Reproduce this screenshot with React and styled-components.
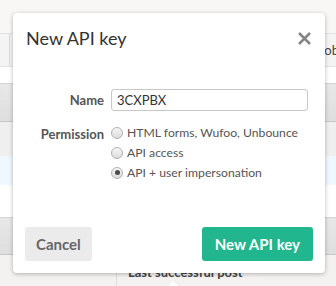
import styled, { createGlobalStyle } from "styled-components"

const GlobalStyle = createGlobalStyle`
    html, body {
        margin: 0;
        padding: 0;
        background: #ffffff;
    }
    body {
        font-family: Lato, "Open Sans", "Liberation Sans", sans-serif;
    }
`

const options = [
    { id: "forms", label: "HTML forms, Wufoo, Unbounce", checked: false },
    { id: "api", label: "API access", checked: false },
    { id: "impersonation", label: "API + user impersonation", checked: true },
]

export default function App() {
    return (
        <>
            <GlobalStyle />
            <Page>
                <TopStrip />
                <HeaderRow>
                    <EdgeCell />
                    <HeaderText>ob</HeaderText>
                </HeaderRow>
                <Band $height={16} $bg="#ffffff" />
                <GradientBar $height={39} />
                <Band $height={34} $bg="#efefef" />
                <Band $height={29} $bg="#eff8fe" />
                <Band $height={32} $bg="#ffffff" />
                <GradientBar $height={38} />
                <FooterRow>
                    <FooterCell />
                    <FooterText>Last successful post</FooterText>
                </FooterRow>

                <Dialog>
                    <DialogHeader>
                        <Title>New API key</Title>
                        <Close aria-label="Close">
                            <svg width="15" height="15" viewBox="0 0 15 15">
                                <path d="M2 2 L13 13 M13 2 L2 13" stroke="#858585" strokeWidth="2.5" />
                            </svg>
                        </Close>
                    </DialogHeader>
                    <Form>
                        <Label>Name</Label>
                        <TextInput defaultValue="3CXPBX" />
                        <Label $top>Permission</Label>
                        <Options>
                            {options.map((o) => (
                                <Option key={o.id}>
                                    <Radio $checked={o.checked} />
                                    <OptionText>{o.label}</OptionText>
                                </Option>
                            ))}
                        </Options>
                    </Form>
                    <DialogFooter>
                        <Button>Cancel</Button>
                        <Button $primary>New API key</Button>
                    </DialogFooter>
                </Dialog>
                <Pointer />
            </Page>
        </>
    )
}

const Page = styled.div`
    position: relative;
    width: 336px;
    height: 286px;
    overflow: hidden;
    display: flex;
    flex-direction: column;
`
const TopStrip = styled.div`
    height: 33px;
    flex: none;
    background: #f8f7f5;
`
const HeaderRow = styled.div`
    height: 34px;
    flex: none;
    display: flex;
    align-items: center;
    background: #f4f4f4;
    border-top: 1px solid #e2e2e2;
    border-bottom: 1px solid #e2e2e2;
    box-sizing: border-box;
`
const EdgeCell = styled.div`
    width: 9px;
    align-self: stretch;
    border-right: 1px solid #dcdcdc;
`
const HeaderText = styled.div`
    margin-left: auto;
    margin-right: -3px;
    font-size: 13px;
    color: #444;
`
const Band = styled.div`
    height: ${(p) => p.$height}px;
    flex: none;
    background: ${(p) => p.$bg};
`
const GradientBar = styled.div`
    height: ${(p) => p.$height}px;
    flex: none;
    box-sizing: border-box;
    background: linear-gradient(#e8e8e8, #dedede);
    border-top: 1px solid #d4d4d4;
    border-bottom: 1px solid #c8c8c8;
`
const FooterRow = styled.div`
    flex: 1;
    display: flex;
    background: #f3f2f0;
`
const FooterCell = styled.div`
    width: 116px;
    border-right: 1px solid #e0dedb;
`
const FooterText = styled.div`
    margin: 9px 0 0 11px;
    font-size: 13px;
    font-weight: 700;
    color: #444;
`
const Dialog = styled.div`
    position: absolute;
    left: 13px;
    top: 13px;
    width: 312px;
    height: 260px;
    box-sizing: border-box;
    background: #ffffff;
    border-radius: 4px;
    box-shadow: 0 1px 4px rgba(0, 0, 0, 0.28);
    display: flex;
    flex-direction: column;
`
const Pointer = styled.div`
    position: absolute;
    left: 168px;
    top: 281px;
    width: 0;
    height: 0;
    border-left: 5px solid transparent;
    border-right: 5px solid transparent;
    border-bottom: 5px solid #ffffff;
`
const DialogHeader = styled.div`
    display: flex;
    align-items: center;
    justify-content: space-between;
    padding: 13px 13px 0 13px;
    height: 24px;
`
const Title = styled.h2`
    margin: 0;
    font-size: 18px;
    font-weight: 400;
    color: #333;
    line-height: 24px;
`
const Close = styled.div`
    display: flex;
    margin-top: 1px;
`
const Form = styled.div`
    display: grid;
    grid-template-columns: 91px 197px;
    column-gap: 7px;
    row-gap: 13px;
    margin-top: 39px;
`
const Label = styled.div`
    text-align: right;
    font-size: 13px;
    font-weight: 700;
    color: #555;
    line-height: 22px;
    align-self: ${(p) => (p.$top ? "start" : "center")};
    margin-top: ${(p) => (p.$top ? "-1px" : "0")};
`
const TextInput = styled.input`
    box-sizing: border-box;
    width: 197px;
    height: 22px;
    padding: 0 5px;
    border: 1px solid #c8c8c8;
    border-radius: 3px;
    font-family: Lato, "Liberation Sans", sans-serif;
    font-size: 13px;
    color: #333;
    outline: none;
`
const Options = styled.div`
    display: flex;
    flex-direction: column;
    gap: 3px;
`
const Option = styled.label`
    display: flex;
    align-items: center;
    gap: 4px;
    height: 17px;
    font-size: 12.2px;
    color: #555;
`
const OptionText = styled.span`
    white-space: nowrap;
`
const Radio = styled.span`
    position: relative;
    width: 12px;
    height: 12px;
    flex: none;
    box-sizing: border-box;
    border-radius: 50%;
    border: 1px solid #b0b0b0;
    background: linear-gradient(#f6f6f6, #dcdcdc);
    &::after {
        content: "";
        display: ${(p) => (p.$checked ? "block" : "none")};
        position: absolute;
        left: 2.5px;
        top: 2.5px;
        width: 5px;
        height: 5px;
        border-radius: 50%;
        background: #4a4a4a;
    }
`
const DialogFooter = styled.div`
    margin-top: auto;
    display: flex;
    justify-content: space-between;
    padding: 0 12px 12px 12px;
`
const Button = styled.button`
    height: 34px;
    padding: 0 ${(p) => (p.$primary ? "13px" : "11px")};
    border: none;
    border-radius: 3px;
    font-family: Lato, "Liberation Sans", sans-serif;
    font-size: 15px;
    font-weight: 700;
    background: ${(p) => (p.$primary ? "#21b68d" : "#ebebeb")};
    color: ${(p) => (p.$primary ? "#ffffff" : "#666")};
`
